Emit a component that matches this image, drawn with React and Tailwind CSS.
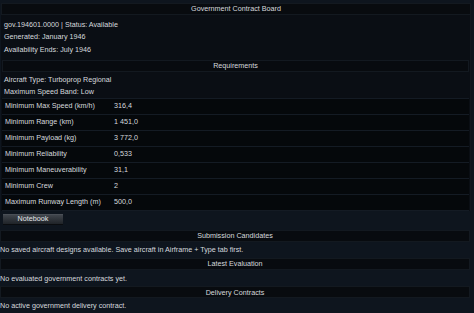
export default function App() {
  const rows = [
    ["Minimum Max Speed (km/h)", "316,4"],
    ["Minimum Range (km)", "1 451,0"],
    ["Minimum Payload (kg)", "3 772,0"],
    ["Minimum Reliability", "0,533"],
    ["Minimum Maneuverability", "31,1"],
    ["Minimum Crew", "2"],
    ["Maximum Runway Length (m)", "500,0"],
  ];
  const Header = ({ children }) => (
    <div className="h-[12px] flex items-center justify-center bg-[#080b0f] border border-[#131920]">
      {children}
    </div>
  );
  return (
    <div
      className="w-[474px] h-[313px] bg-[#0e151e] text-[#d6dade] text-[7.2px] leading-none overflow-hidden flex flex-col"
      style={{ fontFamily: '"Liberation Sans", Arial, sans-serif' }}
    >
      <div className="pt-[3px] pl-[1px] pr-[3px]">
        <Header>Government Contract Board</Header>
      </div>
      <div className="ml-[1px] mr-[3px] bg-[#0a0e14] border-r border-[#121820] flex flex-col">
        <div className="flex flex-col pt-[3px] pb-[4px] pl-[3px]">
          <div className="h-[12.5px] flex items-center">gov.194601.0000 | Status: Available</div>
          <div className="h-[12.5px] flex items-center">Generated: January 1946</div>
          <div className="h-[12.5px] flex items-center">Availability Ends: July 1946</div>
        </div>
        <div className="pl-[1px] pr-[1px]">
          <Header>Requirements</Header>
        </div>
        <div className="flex flex-col pt-[2px] pl-[3px]">
          <div className="h-[12px] flex items-center">Aircraft Type: Turboprop Regional</div>
          <div className="h-[12px] flex items-center">Maximum Speed Band: Low</div>
        </div>
        <div className="mt-[0px] ml-[1px] mr-[1px] flex flex-col bg-[#141b24] gap-[1px] py-[1px]">
          {rows.map(([k, v]) => (
            <div key={k} className="h-[15px] flex items-center bg-[#05080b]">
              <div className="w-[112px] pl-[3px]">{k}</div>
              <div>{v}</div>
            </div>
          ))}
        </div>
      </div>
      <div className="pt-[3px] pl-[3px]">
        <div className="w-[60px] h-[11px] flex items-center justify-center bg-gradient-to-b from-[#40454c] to-[#1f2328] border-t border-[#4a4f56] border-b border-b-[#0a0c0f] text-[#e3e6ea]">
          Notebook
        </div>
      </div>
      <div className="pt-[5px] pr-[4px]">
        <Header>Submission Candidates</Header>
      </div>
      <div className="h-[17px] flex items-center">No saved aircraft designs available. Save aircraft in Airframe + Type tab first.</div>
      <div className="pr-[4px]">
        <Header>Latest Evaluation</Header>
      </div>
      <div className="h-[17px] flex items-center">No evaluated government contracts yet.</div>
      <div className="pr-[4px]">
        <Header>Delivery Contracts</Header>
      </div>
      <div className="h-[15px] flex items-center">No active government delivery contract.</div>
    </div>
  );
}
